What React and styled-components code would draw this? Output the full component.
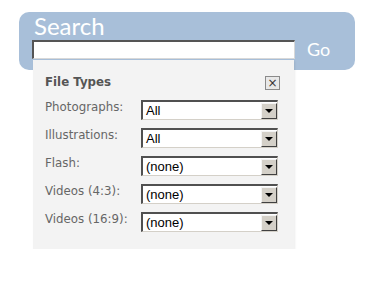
import React from 'react';
import styled, { createGlobalStyle } from 'styled-components';

const GlobalStyle = createGlobalStyle`
  body {
    margin: 0;
    background: #fff;
  }
`;

const Page = styled.div`
  padding: 12px 0 0 19px;
`;

/* ----------------------- SEARCH BAR ----------------------- */

const SearchBar = styled.div`
  display: flex;
  align-items: flex-end;
  width: 336px;
  height: 58px;
  box-sizing: border-box;
  padding: 0 0 11px 13px;
  background-color: #a8bfd9;
  border-radius: 10px;
`;

const Field = styled.div`
  display: flex;
  flex-direction: column;
`;

const Title = styled.div`
  font-family: 'Lato', sans-serif;
  font-size: 24px;
  line-height: 28px;
  color: #fff;
  padding-left: 2px;
`;

const Input = styled.input`
  display: block;
  width: 263px;
  height: 19px;
  box-sizing: border-box;
  margin: 0;
  padding: 0 3px;
  background: #fff;
  border-style: solid;
  border-width: 2px 1px 1px 2px;
  border-color: #555 #d8d8d8 #d8d8d8 #555;
  outline: none;
`;

const Go = styled.div`
  font-family: 'Lato', sans-serif;
  font-size: 18px;
  line-height: 20px;
  color: #fff;
  margin: 0 0 0 12px;
`;

/* ----------------------- DROPDOWN ----------------------- */

/* the dropdown hangs from the input and lies over the bar's bottom edge */
const Panel = styled.div`
  position: relative;
  z-index: 1;
  margin: -10px 0 0 14px;
  width: 261px;
  height: 189px;
  box-sizing: border-box;
  padding: 14px 14px 0 12px;
  background-color: #f3f3f3;
  box-shadow: 1px 1px 2px rgba(0, 0, 0, 0.08);
  font-family: 'DejaVu Sans', Verdana, sans-serif;
  font-size: 11.8px;
`;

const PanelHead = styled.div`
  display: flex;
  justify-content: space-between;
  align-items: flex-start;
  margin-bottom: 10px;
`;

const PanelTitle = styled.div`
  font-weight: bold;
  color: #555;
  line-height: 13px;
  padding-top: 2px;
`;

const Close = styled.div`
  display: flex;
  align-items: center;
  justify-content: center;
  width: 15px;
  height: 14px;
  box-sizing: border-box;
  margin-top: 2px;
  border: 1px solid #8a8a8a;
  background: #e8e8e8;
  color: #333;
  font-family: 'DejaVu Sans', sans-serif;
  font-size: 12px;
  line-height: 12px;
`;

const Rows = styled.div`
  display: flex;
  flex-direction: column;
  gap: 8px;
`;

const Row = styled.div`
  display: flex;
  align-items: flex-start;
`;

const Label = styled.div`
  width: 96px;
  padding-top: 1px;
  color: #666;
  line-height: 13px;
`;

const Select = styled.div`
  display: flex;
  align-items: center;
  width: 137px;
  height: 20px;
  box-sizing: border-box;
  border-style: solid;
  border-width: 2px 1px 1px 2px;
  border-color: #505050 #d4d0c8 #d4d0c8 #505050;
  background: #fff;
`;

const Value = styled.div`
  flex: 1;
  padding-left: 3px;
  font-family: 'Liberation Sans', Arial, sans-serif;
  font-size: 13px;
  line-height: 17px;
  color: #000;
`;

const Arrow = styled.div`
  display: flex;
  align-items: center;
  justify-content: center;
  width: 16px;
  height: 16px;
  box-sizing: border-box;
  background: #d4d0c8;
  border-style: solid;
  border-width: 1px;
  border-color: #f4f4f4 #404040 #404040 #f4f4f4;

  &::after {
    content: '';
    border-left: 4px solid transparent;
    border-right: 4px solid transparent;
    border-top: 4px solid #000;
  }
`;

const fileTypes = [
  ['Photographs:', 'All'],
  ['Illustrations:', 'All'],
  ['Flash:', '(none)'],
  ['Videos (4:3):', '(none)'],
  ['Videos (16:9):', '(none)'],
];

export default function App() {
  return (
    <Page>
      <GlobalStyle />
      <SearchBar>
        <Field>
          <Title>Search</Title>
          <Input type="text" />
        </Field>
        <Go>Go</Go>
      </SearchBar>
      <Panel>
        <PanelHead>
          <PanelTitle>File Types</PanelTitle>
          <Close>×</Close>
        </PanelHead>
        <Rows>
          {fileTypes.map(([label, value]) => (
            <Row key={label}>
              <Label>{label}</Label>
              <Select>
                <Value>{value}</Value>
                <Arrow />
              </Select>
            </Row>
          ))}
        </Rows>
      </Panel>
    </Page>
  );
}
